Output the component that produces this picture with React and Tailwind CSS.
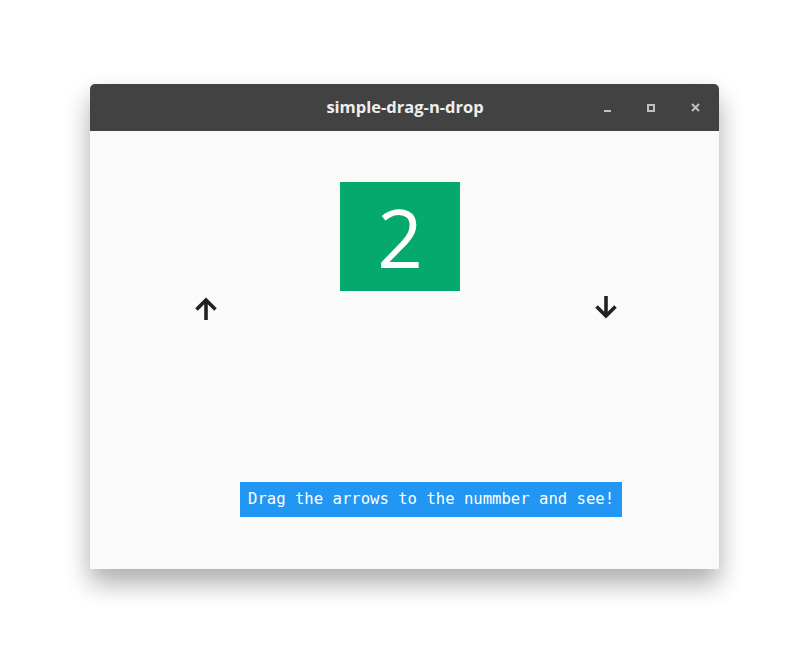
import React from 'react';

const ArrowUp = () => (
  <svg width="24" height="24" viewBox="0 0 24 24" fill="none" stroke="#212121" strokeWidth="3.6" strokeLinecap="butt" strokeLinejoin="miter">
    <path d="M12 24V4" />
    <path d="M2.5 13.5L12 4l9.5 9.5" />
  </svg>
);

const ArrowDown = () => (
  <svg width="24" height="24" viewBox="0 0 24 24" fill="none" stroke="#212121" strokeWidth="3.6" strokeLinecap="butt" strokeLinejoin="miter">
    <path d="M12 0v20" />
    <path d="M2.5 10.5L12 20l9.5-9.5" />
  </svg>
);

export default function App() {
  return (
    <div className="w-[809px] h-[665px] bg-white pt-[84px] pl-[90px]">
      <div className="w-[629px] rounded-t-[5px] shadow-[0_14px_26px_rgba(0,0,0,0.33)]">
        {/* Title bar */}
        <div className="relative h-[47px] bg-[#424242] rounded-t-[5px] flex items-center justify-center">
          <span className="text-[16.5px] font-bold text-[#eeeeee] pl-[1px]" style={{ fontFamily: '"Open Sans", sans-serif' }}>
            simple-drag-n-drop
          </span>
          <div className="absolute right-[19px] top-0 h-full flex items-center gap-[36px]">
            <div className="w-[7px] h-[2px] bg-[#c0c0c0] mt-[7px]" />
            <div className="w-[8px] h-[8px] border-[2px] border-[#c0c0c0]" />
            <svg width="9" height="9" viewBox="0 0 9 9" stroke="#c0c0c0" strokeWidth="2">
              <path d="M1 1l7 7M8 1l-7 7" />
            </svg>
          </div>
        </div>
        {/* Body */}
        <div className="h-[438px] bg-[#fafafa] flex flex-col">
          <div className="mt-[51px] ml-[250px] w-[120px] h-[109px] bg-[#05a86d] flex items-center justify-center">
            <span className="text-[80px] leading-none text-white" style={{ fontFamily: '"Open Sans", sans-serif' }}>2</span>
          </div>
          <div className="mt-[5px] flex">
            <div className="ml-[104px]"><ArrowUp /></div>
            <div className="ml-[376px]"><ArrowDown /></div>
          </div>
          <div className="mt-[162px] ml-[150px] w-[382px] h-[35px] bg-[#2196f3] flex items-center pl-[8px]">
            <span className="text-[15.6px] text-white whitespace-nowrap" style={{ fontFamily: '"DejaVu Sans Mono", monospace' }}>
              Drag the arrows to the nummber and see!
            </span>
          </div>
        </div>
      </div>
    </div>
  );
}
